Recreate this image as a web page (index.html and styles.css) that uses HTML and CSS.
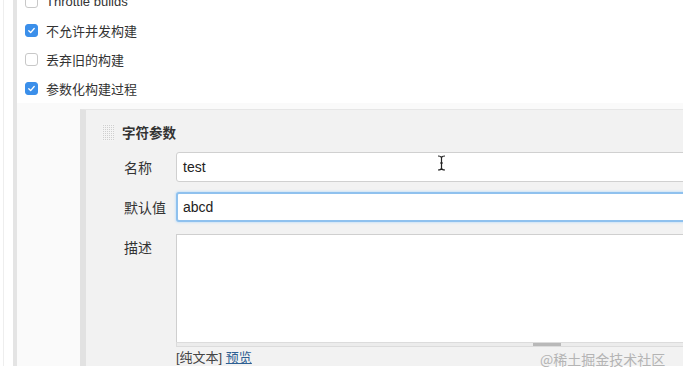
FILE: index.html
```html
<!DOCTYPE html>
<html lang="zh">
<head>
    <meta charset="UTF-8">
    <title>参数化构建过程</title>
    <link rel="stylesheet" href="styles.css">
</head>
<body>
<div class="frame">
    <div class="page">
        <div class="options">
            <div class="opt"><span class="box"></span><span>Throttle builds</span></div>
            <div class="opt"><span class="box on"><svg viewBox="0 0 13 13"><path d="M3.3 6.8 L5.5 9 L9.7 4.2" fill="none" stroke="#fff" stroke-width="1.6" stroke-linecap="round" stroke-linejoin="round"/></svg></span><span>不允许并发构建</span></div>
            <div class="opt"><span class="box"></span><span>丢弃旧的构建</span></div>
            <div class="opt"><span class="box on"><svg viewBox="0 0 13 13"><path d="M3.3 6.8 L5.5 9 L9.7 4.2" fill="none" stroke="#fff" stroke-width="1.6" stroke-linecap="round" stroke-linejoin="round"/></svg></span><span>参数化构建过程</span></div>
        </div>
        <div class="params">
            <div class="panel">
                <div class="head">
                    <span class="handle"></span>
                    <b>字符参数</b>
                </div>
                <div class="row">
                    <label>名称</label>
                    <div class="field">test</div>
                </div>
                <div class="row">
                    <label>默认值</label>
                    <div class="field focus">abcd</div>
                </div>
                <div class="row top">
                    <label>描述</label>
                    <div>
                        <div class="area"></div>
                        <div class="grip"><span></span></div>
                        <div class="syntax">[纯文本] <a href="#">预览</a></div>
                    </div>
                </div>
            </div>
        </div>
    </div>
</div>
<svg class="ibeam" width="9" height="16" viewBox="0 0 9 16"><path d="M1 1 Q4.5 1 4.5 3 Q4.5 1 8 1 M4.5 3 V13 M1 15 Q4.5 15 4.5 13 Q4.5 15 8 15 M3 8 H6" fill="none" stroke="#222" stroke-width="1.2"/></svg>
<div class="mark">@稀土掘金技术社区</div>
</body>
</html>
```

FILE: styles.css
```css
* {box-sizing:border-box}
body {
    margin:0;
    width:683px;
    height:385px;
    overflow:hidden;
    background:#fff;
    font-family:"Liberation Sans", "Noto Sans CJK SC", sans-serif;
    color:#333;
    position:relative;
}
.frame {
    margin-left:3px;
    border-left:1px solid #eee;
    padding-left:9px;
    height:366px;
}
.page {
    border-left:4px solid #e4e4e4;
    height:366px;
    display:flex;
    flex-direction:column;
}
.options {margin-top:-13px}
.opt {
    height:29px;
    display:flex;
    align-items:center;
    gap:8px;
    padding-left:8px;
    font-size:13px;
}
.box {
    width:13px;
    height:13px;
    border:1px solid #c8c8c8;
    border-radius:3px;
    background:#fff;
    display:flex;
}
.box.on {background:#3b8fea;border-color:#3b8fea}
.box svg {width:11px;height:11px}
.params {
    flex:1;
    background:#fafafa;
    padding:6px 0 0 63px;
    display:flex;
}
.panel {
    flex:1;
    background:#f2f2f2;
    border-left:6px solid #e2e2e2;
    border-top:1px solid #e6e6e6;
    padding:12px 0 0 0;
    white-space:nowrap;
}
.head {
    display:flex;
    align-items:center;
    gap:8px;
    padding-left:16px;
    font-size:13.5px;
    height:20px;
}
.handle {
    width:12px;
    height:17px;
    background-color:#cfcfcf;
    background-image:linear-gradient(90deg, #f4f4f4 1px, transparent 1px), linear-gradient(#f4f4f4 1px, transparent 1px);
    background-size:2px 2px;
}
.row {
    display:flex;
    align-items:center;
    padding-left:38px;
    margin-top:10px;
    font-size:14px;
}
.row.top {align-items:flex-start;margin-top:12px}
.row label {width:52px}
.row.top label {padding-top:3px}
.field {
    width:700px;
    height:30px;
    background:#fff;
    border:1px solid #d0d0d0;
    border-radius:3px;
    padding:0 6px;
    line-height:28px;
    font-size:14px;
    color:#222;
}
.field.focus {
    border:2px solid #8fc1ee;
    box-shadow:0 0 2px 1px #cfe4f7;
    padding:0 5px;
    line-height:26px;
}
.area {
    width:742px;
    height:108px;
    background:#fff;
    border:1px solid #cfcfcf;
    border-bottom:none;
}
.grip {
    width:742px;
    height:5px;
    background:#ececec;
    border:1px solid #dcdcdc;
    display:flex;
    justify-content:center;
}
.grip span {
    width:28px;
    height:3px;
    background:#b9b9b9;
}
.syntax {
    font-size:13px;
    color:#444;
}
.syntax a {color:#2e5f93}
.ibeam {
    position:absolute;
    left:437px;
    top:155px;
}
.mark {
    position:absolute;
    left:540px;
    top:349px;
    font-size:14px;
    color:#b4b4b4;
    font-family:"Noto Sans CJK SC", sans-serif;
}
```
